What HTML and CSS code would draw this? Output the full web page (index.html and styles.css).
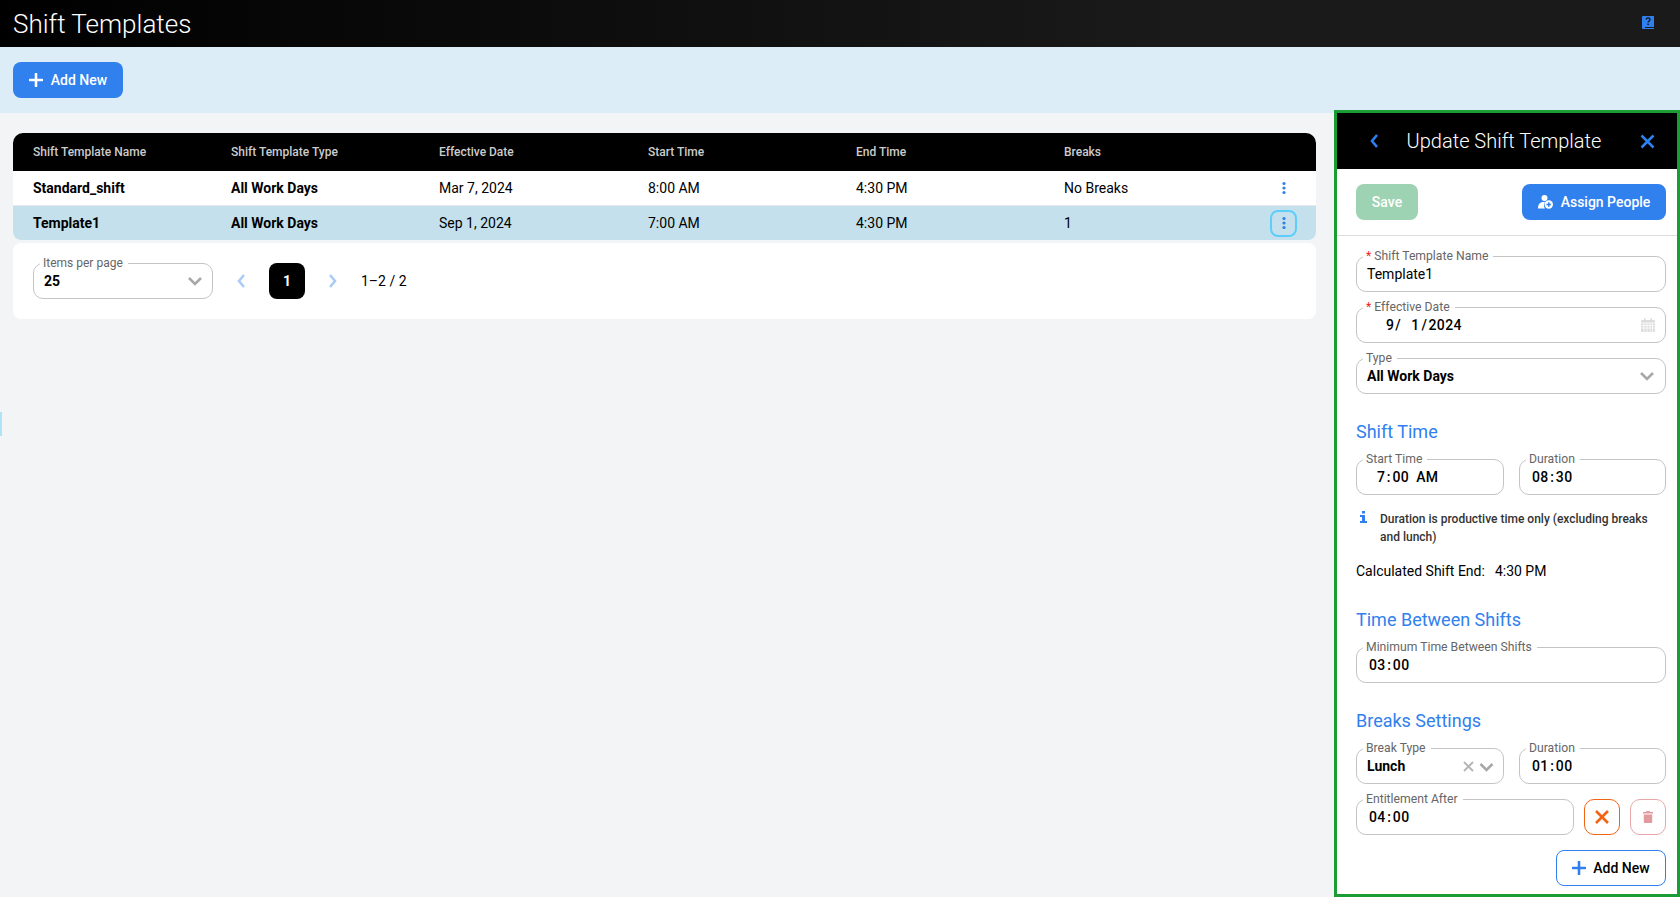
FILE: index.html
```html
<!DOCTYPE html>
<html lang="en">
<head>
<meta charset="utf-8">
<title>Shift Templates</title>
<link rel="stylesheet" href="styles.css">
</head>
<body>
<header class="topbar">
  <h1 class="page-title">Shift Templates</h1>
  <svg class="help-icon" width="12" height="14" viewBox="0 0 12 14"><path fill="#2f7fee" d="M1 0h11v11H3v1h9v1H1a1 1 0 0 1-1-1V1a1 1 0 0 1 1-1z"/><path fill="none" stroke="#111" stroke-width="1.3" d="M4.2 3.6c0-2.4 3.8-2.4 3.8-.1 0 1.400-1.900 1.400-1.900 3"/><rect x="5.400" y="7.600" width="1.400" height="1.400" fill="#111"/></svg>
</header>
<div class="toolbar">
  <button class="btn btn-primary btn-add">
    <svg width="14" height="14" viewBox="0 0 14 14"><path d="M7 1v12M1 7h12" stroke="#fff" stroke-width="2.600" stroke-linecap="round"/></svg>
    Add New
  </button>
</div>
<main class="content">
  <div class="table">
    <div class="row row-head">
      <div>Shift Template Name</div><div>Shift Template Type</div><div>Effective Date</div><div>Start Time</div><div>End Time</div><div>Breaks</div><div></div>
    </div>
    <div class="row row-body">
      <div class="strong">Standard_shift</div><div class="strong">All Work Days</div><div>Mar 7, 2024</div><div>8:00 AM</div><div>4:30 PM</div><div>No Breaks</div>
      <div class="cell-action"><button class="kebab"><svg width="4" height="14" viewBox="0 0 4 14"><g fill="#2f7fee"><circle cx="2" cy="2.500" r="1.600"/><circle cx="2" cy="7" r="1.600"/><circle cx="2" cy="11.500" r="1.600"/></g></svg></button></div>
    </div>
    <div class="row row-body row-selected">
      <div class="strong">Template1</div><div class="strong">All Work Days</div><div>Sep 1, 2024</div><div>7:00 AM</div><div>4:30 PM</div><div>1</div>
      <div class="cell-action"><button class="kebab kebab-focus"><svg width="4" height="14" viewBox="0 0 4 14"><g fill="#2f7fee"><circle cx="2" cy="2.500" r="1.600"/><circle cx="2" cy="7" r="1.600"/><circle cx="2" cy="11.500" r="1.600"/></g></svg></button></div>
    </div>
  </div>
  <div class="pager">
    <div class="field field-pager">
      <span class="field-label">Items per page</span>
      <span class="value-bold">25</span>
      <svg class="chev-grey" width="16" height="10" viewBox="0 0 16 10"><path d="M2 2l6 6 6-6" fill="none" stroke="#a8a8a8" stroke-width="2.600"/></svg>
    </div>
    <svg class="page-arrow" width="10" height="16" viewBox="0 0 10 16"><path d="M8 2L3 8l5 6" fill="none" stroke="#a9ccf7" stroke-width="2.600"/></svg>
    <div class="page-current">1</div>
    <svg class="page-arrow page-next" width="10" height="16" viewBox="0 0 10 16"><path d="M2 2l5 6-5 6" fill="none" stroke="#a9ccf7" stroke-width="2.600"/></svg>
    <span class="page-range">1–2 / 2</span>
  </div>
</main>
<div class="edge-marker"></div>
<aside class="drawer">
  <div class="drawer-head">
    <svg width="10" height="16" viewBox="0 0 10 16"><path d="M8 2L3 8l5 6" fill="none" stroke="#2f7fee" stroke-width="2.600"/></svg>
    <h2 class="drawer-title">Update Shift Template</h2>
    <svg width="15" height="15" viewBox="0 0 15 15"><path d="M1.500 1.500l12 12M13.500 1.500l-12 12" fill="none" stroke="#2f7fee" stroke-width="2.600"/></svg>
  </div>
  <div class="drawer-actions">
    <button class="btn btn-save">Save</button>
    <button class="btn btn-primary btn-assign">
      <svg width="15" height="14" viewBox="0 0 15 14"><circle cx="6.500" cy="3" r="3" fill="#fff"/><path fill="#fff" d="M0 13.500c0-4 1.800-6.500 5.500-6.500 1 0 1.500.2 1.500.2-1.400 1.600-1.400 4.600 0 6.300z"/><circle cx="10.800" cy="9.500" r="4.200" fill="#fff"/><path d="M10.800 7.200v4.600M8.500 9.500h4.600" stroke="#3080ee" stroke-width="1.500"/></svg>
      Assign People
    </button>
  </div>
  <div class="drawer-body">
    <div class="field"><span class="field-label"><i class="req">*</i> Shift Template Name</span><span class="value">Template1</span></div>
    <div class="field"><span class="field-label"><i class="req">*</i> Effective Date</span>
      <span class="value-time date-value">9<b class="sep-date">/</b><b class="day">1</b><b class="sep-year">/</b>2024</span>
      <svg class="trail" width="14" height="14" viewBox="0 0 14 14"><path fill="#dcdcdc" d="M1 2h2V0h1.500v2h5V0H11v2h2a1 1 0 0 1 1 1v10a1 1 0 0 1-1 1H1a1 1 0 0 1-1-1V3a1 1 0 0 1 1-1z"/><path stroke="#fff" stroke-width=".8" d="M0 5h14M0 7.500h14M0 10h14M3 5v9M6 5v9M9 5v9M11.500 5v9"/></svg>
    </div>
    <div class="field"><span class="field-label">Type</span><span class="value-bold">All Work Days</span>
      <svg class="trail" width="16" height="10" viewBox="0 0 16 10"><path d="M2 2l6 6 6-6" fill="none" stroke="#a8a8a8" stroke-width="2.600"/></svg>
    </div>

    <h3 class="section-title">Shift Time</h3>
    <div class="pair">
      <div class="field"><span class="field-label">Start Time</span><span class="value-time start-value">7<b class="colon">:</b>00<b class="ampm">AM</b></span></div>
      <div class="field"><span class="field-label">Duration</span><span class="value-time">08<b class="colon">:</b>30</span></div>
    </div>
    <div class="note">
      <svg width="7" height="12" viewBox="0 0 7 12"><path fill="#2f7fee" d="M2 0h3v2.600H2zM0 4h5v6h2v2H0v-2h2V6H0z"/></svg>
      <p>Duration is productive time only (excluding breaks and lunch)</p>
    </div>
    <p class="calc"><span>Calculated Shift End:</span><span>4:30 PM</span></p>

    <h3 class="section-title section-between">Time Between Shifts</h3>
    <div class="field"><span class="field-label">Minimum Time Between Shifts</span><span class="value-time">03<b class="colon">:</b>00</span></div>

    <h3 class="section-title section-breaks">Breaks Settings</h3>
    <div class="pair">
      <div class="field"><span class="field-label">Break Type</span><span class="value-bold">Lunch</span>
        <span class="trail-group">
          <svg width="11" height="11" viewBox="0 0 11 11"><path d="M1 1l9 9M10 1l-9 9" stroke="#b5b5b5" stroke-width="1.900"/></svg>
          <svg width="15" height="10" viewBox="0 0 15 10"><path d="M1.500 2l6 6 6-6" fill="none" stroke="#a8a8a8" stroke-width="2.600"/></svg>
        </span>
      </div>
      <div class="field"><span class="field-label">Duration</span><span class="value-time">01<b class="colon">:</b>00</span></div>
    </div>
    <div class="break-row">
      <div class="field field-grow"><span class="field-label">Entitlement After</span><span class="value-time">04<b class="colon">:</b>00</span></div>
      <button class="icon-btn icon-btn-cancel"><svg width="14" height="14" viewBox="0 0 14 14"><path d="M1 1l12 12M13 1L1 13" stroke="#f06414" stroke-width="2.600"/></svg></button>
      <button class="icon-btn icon-btn-delete"><svg width="10" height="12" viewBox="0 0 10 12"><path fill="#e39a9e" d="M3.500 0h3l.5 1h3v1.500H0V1h3zM.8 3.500h8.400V11a1 1 0 0 1-1 1H1.800a1 1 0 0 1-1-1z"/></svg></button>
    </div>
    <div class="add-row">
      <button class="btn btn-outline">
        <svg width="14" height="14" viewBox="0 0 14 14"><path d="M7 1v12M1 7h12" stroke="#2f7fee" stroke-width="2.600" stroke-linecap="round"/></svg>
        Add New
      </button>
    </div>
  </div>
</aside>
</body>
</html>
```
FILE: styles.css
```css
* { box-sizing: border-box; }
html, body { margin: 0; height: 100%; }
body {
  position: relative;
  height: 897px;
  overflow: hidden;
  display: flex;
  flex-direction: column;
  font-family: Roboto, "Liberation Sans", sans-serif;
  font-size: 14px;
  color: #000;
  background: #f2f4f6;
}
button { font-family: inherit; cursor: pointer; }
h1, h2, h3, p { margin: 0; font-weight: 400; }

.topbar {
  flex: none;
  height: 47px;
  padding: 0 26px 0 13px;
  display: flex;
  align-items: center;
  justify-content: space-between;
  background: linear-gradient(90deg, #000 0%, #1a1a1a 70%);
}
.page-title { font-size: 26px; font-weight: 300; color: #fff; }
.help-icon { margin-bottom: 1px; }

.toolbar {
  flex: none;
  height: 66px;
  padding: 15px 13px;
  background: #dcedf8;
}
.btn {
  height: 36px;
  border: 0;
  border-radius: 8px;
  display: inline-flex;
  align-items: center;
  justify-content: center;
  gap: 7px;
  font-size: 14px;
  font-weight: 500;
}
.btn-primary { background: #3080ee; color: #fff; }
.btn-add { width: 110px; gap: 8px; }

.content { flex: 1; padding: 20px 364px 0 13px; }
.table { border-radius: 10px 10px 8px 8px; overflow: hidden; background: #fff; }
.row {
  display: grid;
  grid-template-columns: 198px 208px 209px 208px 208px 1fr 60px;
  align-items: center;
  padding-left: 20px;
}
.row > div { min-width: 0; }
.row-head { height: 38px; background: #000; color: #ccc; font-size: 12px; font-weight: 500; }
.row-body { height: 35px; border-bottom: 1px solid #e6e9ec; }
.row-selected { height: 34px; border-bottom: 0; background: #c3e0ec; }
.strong { font-weight: 700; }
.cell-action { display: flex; justify-content: flex-end; padding-right: 19px; }
.kebab {
  width: 27px;
  height: 27px;
  padding: 0;
  border: 2px solid transparent;
  border-radius: 8px;
  background: transparent;
  display: flex;
  align-items: center;
  justify-content: center;
}
.kebab-focus { border-color: #5fcdfb; }

.pager {
  margin-top: 3px;
  height: 76px;
  padding: 20px;
  border-radius: 8px;
  background: #fff;
  display: flex;
  align-items: center;
}
.field-pager { flex: 0 0 180px; height: 36px; }
.field-pager .field-label { top: -8px; }
.field-pager .chev-grey { position: absolute; right: 9px; top: 12px; }
.page-arrow { margin-left: 23px; }
.page-current {
  margin-left: 23px;
  width: 36px;
  height: 36px;
  border-radius: 8px;
  background: #000;
  color: #fff;
  font-weight: 700;
  display: flex;
  align-items: center;
  justify-content: center;
}
.page-next { margin-left: 23px; }
.page-range { margin-left: 23px; }

.edge-marker {
  position: absolute;
  left: 0;
  top: 412px;
  width: 2px;
  height: 24px;
  background: #aee3f8;
}

.drawer {
  position: absolute;
  left: 1334px;
  top: 110px;
  width: 346px;
  height: 787px;
  border: 3px solid #1c9c34;
  background: #fff;
  overflow: hidden;
}
.drawer-head {
  height: 56px;
  padding: 0 22px 0 32px;
  background: #000;
  display: flex;
  align-items: center;
  justify-content: space-between;
}
.drawer-title { margin-right: 11px; font-size: 20px; font-weight: 300; color: #fff; }
.drawer-actions {
  height: 67px;
  padding: 15px 11px 15px 19px;
  border-bottom: 1px solid #dedede;
  display: flex;
  justify-content: space-between;
}
.btn-save { width: 62px; background: #9dd3b2; color: #fff; }
.btn-assign { width: 144px; gap: 8px; }
.drawer-body { padding: 20px 11px 0 19px; display: flex; flex-direction: column; }
.drawer-body > .field + .field { margin-top: 15px; }

.field {
  position: relative;
  height: 36px;
  padding-left: 10px;
  border: 1px solid #c4c4c4;
  border-radius: 10px;
  background: #fff;
  display: flex;
  align-items: center;
}
.field-label {
  position: absolute;
  left: 6px;
  top: -8px;
  padding: 0 5px 0 3px;
  background: #fff;
  font-size: 12.2px;
  line-height: 15px;
  color: #666;
  white-space: nowrap;
}
.field-pager .field-label { font-size: 12px; }
.req { font-style: normal; color: #f01c1c; }
.value { font-size: 14px; }
.value-bold { font-size: 14px; font-weight: 700; }
.value-time { padding-left: 2px; font-size: 14px; font-weight: 500; letter-spacing: .4px; }
.value-time b { font-weight: 500; }
.colon { margin: 0 1.500px; }
.ampm { margin-left: 7px; }
.start-value { padding-left: 10px; }
.date-value { padding-left: 19px; }
.sep-date { margin: 0 0 0 1px; }
.day { margin-left: 10px; }
.sep-year { margin: 0 1px 0 2px; }
.trail { position: absolute; right: 10px; top: 50%; transform: translateY(-50%); }
.trail-group {
  position: absolute;
  right: 9px;
  top: 12px;
  display: flex;
  align-items: center;
  gap: 5px;
}

.section-title { font-size: 18px; line-height: 22px; color: #3080ee; margin-top: 27px; }
.pair { margin-top: 16px; display: grid; grid-template-columns: 148px 147px; column-gap: 15px; }
.note { margin-top: 15px; padding-left: 4px; display: flex; align-items: flex-start; gap: 13px; }
.note svg { margin-top: 1px; flex: none; }
.note p { font-size: 12px; line-height: 18px; font-weight: 500; color: #333; }
.calc { margin-top: 15px; font-size: 14px; line-height: 20px; display: flex; gap: 10px; }
.section-between { margin-top: 28px; }
.section-between + .field { margin-top: 16px; }
.section-breaks { margin-top: 27px; }
.break-row { margin-top: 15px; display: flex; gap: 10px; }
.field-grow { flex: 1; }
.icon-btn {
  flex: none;
  width: 36px;
  height: 36px;
  padding: 0;
  border-radius: 10px;
  background: #fff;
  display: flex;
  align-items: center;
  justify-content: center;
}
.icon-btn-cancel { border: 1px solid #f06414; }
.icon-btn-delete { border: 1px solid #e8a6a9; }
.add-row { margin-top: 15px; display: flex; justify-content: flex-end; }
.btn-outline { width: 110px; background: #fff; border: 1px solid #3080ee; color: #000; }
```
